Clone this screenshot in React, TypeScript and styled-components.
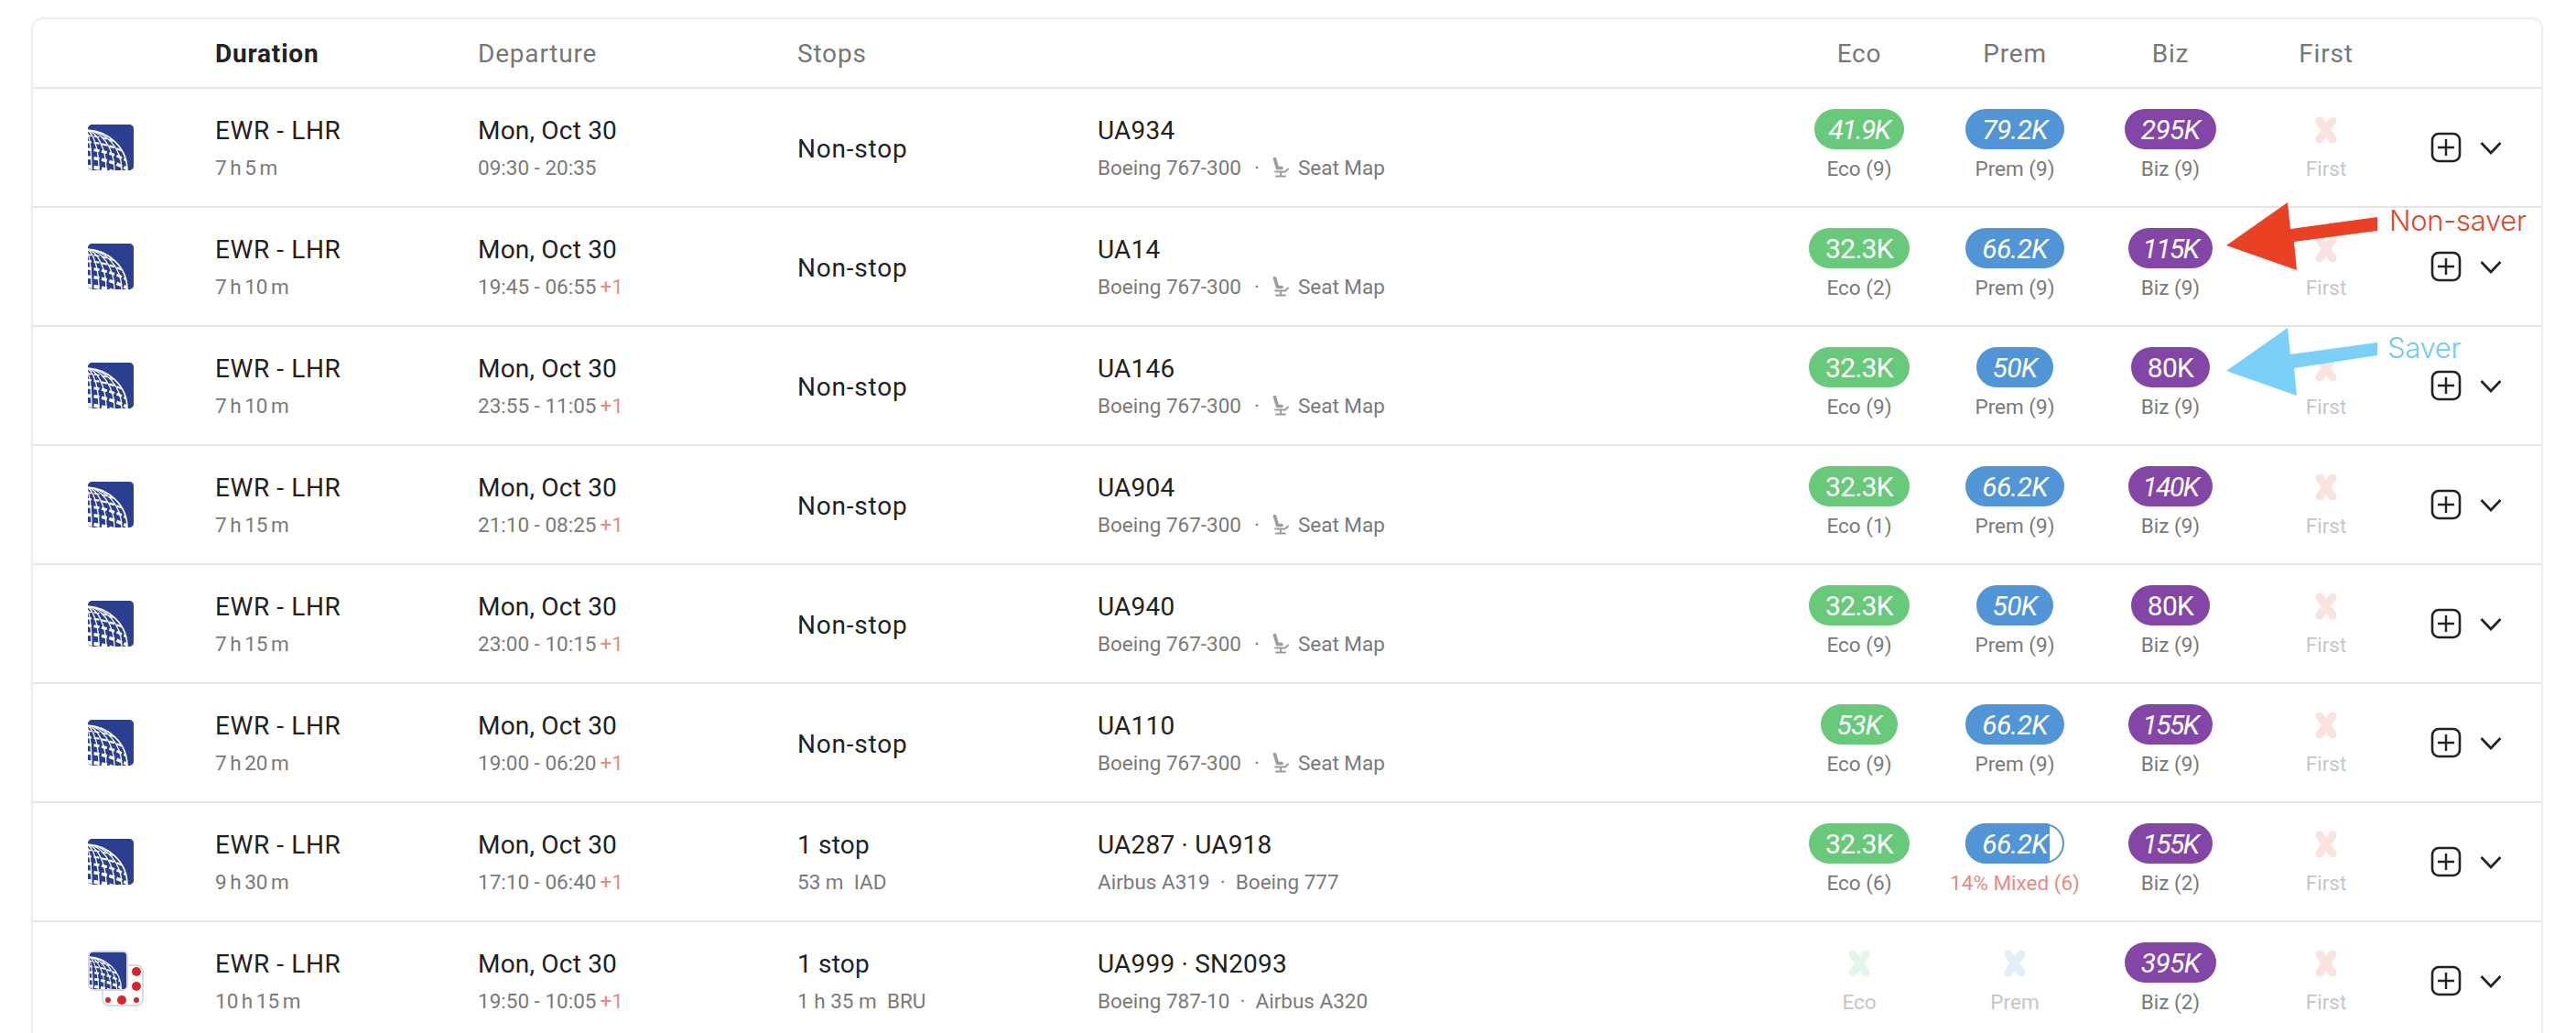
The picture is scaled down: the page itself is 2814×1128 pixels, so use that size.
import React from "react";
import styled, { createGlobalStyle } from "styled-components";

const Global = createGlobalStyle`
  html, body { margin: 0; padding: 0; background: #fff; overflow: hidden; height: 100%; }
  body { font-family: Roboto, "Liberation Sans", sans-serif; color: #222; }
`;
const COLS = "199px 287px 349px 328px 747px 170px 170px 170px 170px 150px";

const Page = styled.div`
  position: relative;
  padding: 21px 38px 0 36px;
  height: 1128px;
  box-sizing: border-box;
  overflow: hidden;
`;
const Card = styled.div`
  background: #fff;
  border-radius: 10px 10px 0 0;
  box-shadow: 0 0 4px rgba(0, 0, 0, 0.2);
`;
const Header = styled.div`
  display: grid;
  grid-template-columns: ${COLS};
  height: 76px;
  box-sizing: border-box;
  align-items: center;
  border-bottom: 2px solid #e6e6e6;
`;
const HeadCell = styled.div<{ $center?: boolean; $active?: boolean }>`
  font-size: 28px;
  letter-spacing: 0.8px;
  font-weight: ${(p) => (p.$active ? 700 : 400)};
  color: ${(p) => (p.$active ? "#222" : "#777")};
  text-align: ${(p) => (p.$center ? "center" : "left")};
`;
const Row = styled.div`
  display: grid;
  grid-template-columns: ${COLS};
  height: 130px;
  box-sizing: border-box;
  align-items: center;
  border-bottom: 2px solid #e6e6e6;
`;
const LogoCell = styled.div`
  padding-left: 60px;
  display: flex;
  align-items: center;
`;
const Stack = styled.div`
  display: flex;
  flex-direction: column;
  gap: 11px;
`;
const Main = styled.div<{ $solo?: boolean; $route?: boolean }>`
  font-size: 28px;
  line-height: 32px;
  letter-spacing: ${(p) => (p.$solo ? "0.8px" : p.$route ? "0.6px" : "0.2px")};
  margin-top: ${(p) => (p.$solo ? "3px" : "0")};
  color: #222;
`;
const Sub = styled.div<{ $narrow?: boolean }>`
  font-size: 22.5px;
  line-height: 26px;
  color: #7a7a7a;
  display: flex;
  align-items: center;
  white-space: pre;
  word-spacing: ${(p) => (p.$narrow ? "-2px" : "0")};
`;
const Plus = styled.span`
  color: #e98b82;
  margin-left: 4px;
`;
const Dot = styled.span`
  margin: 0 14px;
`;
const Fare = styled.div`
  display: flex;
  flex-direction: column;
  align-items: center;
  gap: 7px;
  height: 84px;
`;
const Pill = styled.div<{ $bg: string; $italic?: boolean; $mixed?: boolean; $tight?: boolean }>`
  height: 44px;
  padding: 0 ${(p) => (p.$tight ? "16px" : "18px")};
  border-radius: 22px;
  display: flex;
  align-items: center;
  justify-content: center;
  color: #fff;
  font-size: 30px;
  letter-spacing: ${(p) => (p.$tight ? "-1.6px" : "-0.7px")};
  font-style: ${(p) => (p.$italic ? "italic" : "normal")};
  background: ${(p) =>
    p.$mixed ? `linear-gradient(90deg, ${p.$bg} 85%, #fff 85%)` : p.$bg};
  box-shadow: ${(p) => (p.$mixed ? `inset 0 0 0 2px ${p.$bg}` : "none")};
`;
const FareLabel = styled.div<{ $tone?: "faded" | "mixed" }>`
  font-size: 22.5px;
  line-height: 28px;
  white-space: nowrap;
  color: ${(p) =>
    p.$tone === "faded" ? "#c6c6c6" : p.$tone === "mixed" ? "#e98b82" : "#7a7a7a"};
`;
const CrossSlot = styled.div`
  height: 44px;
  padding-top: 2px;
  box-sizing: border-box;
  display: flex;
  align-items: center;
  justify-content: center;
`;
const Actions = styled.div`
  display: flex;
  align-items: center;
  gap: 20px;
  padding-left: 29px;
`;
const Seat = styled.svg`
  margin-right: 10px;
`;
const Overlay = styled.svg`
  position: absolute;
  left: 0;
  top: 0;
  pointer-events: none;
`;
const Note = styled.div<{ $color: string; $x: number; $y: number }>`
  position: absolute;
  left: ${(p) => p.$x}px;
  top: ${(p) => p.$y}px;
  color: ${(p) => p.$color};
  font-family: Inter, Roboto, sans-serif;
  font-weight: 300;
  font-size: 31px;
  line-height: 36px;
  letter-spacing: -0.3px;
`;

const GREEN = "#69c97b";
const BLUE = "#5295d6";
const PURPLE = "#8446a6";

let uid = 0;
const GlobeArt: React.FC = () => {
  const id = `g${uid++}`;
  return (
    <>
      <defs>
        <clipPath id={id}>
          <rect width="50" height="50" rx="5" />
        </clipPath>
      </defs>
      <g clipPath={`url(#${id})`}>
        <rect width="50" height="50" fill="#2b3f90" />
        <g fill="none" stroke="#fff">
          {[
            { y: 12, w: 1.6 },
            { y: 19, w: 2.2 },
            { y: 27, w: 3 },
            { y: 36, w: 3.6 },
            { y: 46, w: 4.2 },
          ].map((p) => (
            <path key={p.y} d={`M-2 ${p.y} Q 22 ${p.y + 1} 46 ${p.y + 14}`} strokeWidth={p.w} strokeDasharray="6 2.6" />
          ))}
          {[7, 15, 23, 32, 40].map((r) => (
            <ellipse key={r} cx="-3" cy="50" rx={r} ry="44" strokeWidth="1.3" />
          ))}
        </g>
        <path d="M-3 6 A46 44 0 0 1 43 50 L50 50 L50 0 L-3 0Z" fill="#2b3f90" />
        <path d="M-3 6 A46 44 0 0 1 43 50" fill="none" stroke="#fff" strokeWidth="1.6" />
      </g>
    </>
  );
};

const Logo: React.FC<{ partner?: boolean }> = ({ partner }) =>
  partner ? (
    <svg width="62" height="66" viewBox="0 0 62 66">
      <rect x="16" y="16" width="44" height="44" rx="7" fill="#fff" stroke="#d9dbe1" strokeWidth="2" />
      <circle cx="53" cy="23" r="5" fill="#d8262f" />
      <circle cx="53" cy="39" r="5" fill="#d8262f" />
      <circle cx="53" cy="54" r="3" fill="#d8262f" />
      <circle cx="37" cy="54" r="5" fill="#d8262f" />
      <circle cx="22" cy="54" r="3" fill="#d8262f" />
      <rect x="1" y="1" width="42" height="42" rx="6" fill="#d5d7de" stroke="#d5d7de" strokeWidth="2" />
      <svg x="2" y="2" width="40" height="40" viewBox="0 0 50 50">
        <GlobeArt />
      </svg>
    </svg>
  ) : (
    <svg width="50" height="50" viewBox="0 0 50 50">
      <GlobeArt />
    </svg>
  );

const Cross: React.FC<{ color: string }> = ({ color }) => (
  <svg width="30" height="30" viewBox="0 0 30 30">
    <path d="M8 5 L22 25 M22 5 L8 25" stroke={color} strokeWidth="9" strokeLinecap="round" fill="none" />
  </svg>
);

const SeatIcon = () => (
  <Seat width="18" height="22" viewBox="0 0 18 22">
    <path d="M2.5 1.5 L5.5 11.5 L10 11.5" stroke="#9c9c9c" strokeWidth="3.6" fill="none" strokeLinecap="round" strokeLinejoin="round" />
    <path d="M3 15.5 H14 L17 12.5 M9 16 V20 M4 20.5 H14" stroke="#9c9c9c" strokeWidth="1.9" fill="none" strokeLinecap="round" strokeLinejoin="round" />
  </Seat>
);

const AddIcon = () => (
  <svg width="34" height="34" viewBox="0 0 34 34">
    <rect x="2" y="2" width="30" height="30" rx="7" fill="none" stroke="#222" strokeWidth="2.6" />
    <path d="M17 8 V26 M8 17 H26" stroke="#222" strokeWidth="2.4" />
  </svg>
);
const Chevron = () => (
  <svg width="24" height="15" viewBox="0 0 24 15">
    <path d="M1.5 2 L12 13 L22.5 2" fill="none" stroke="#222" strokeWidth="2.6" />
  </svg>
);

type F = { v: string; i?: boolean; l: string; mix?: boolean } | null;
type R = {
  d: string;
  time: string;
  plus?: boolean;
  stop: string;
  stopSub?: string;
  fl: string;
  sub: string;
  seat?: boolean;
  eco: F;
  prem: F;
  biz: F;
  partner?: boolean;
};

const B767 = "Boeing 767-300";
const rows: R[] = [
  { d: "7 h 5 m", time: "09:30 - 20:35", stop: "Non-stop", fl: "UA934", sub: B767, seat: true, eco: { v: "41.9K", i: true, l: "Eco (9)" }, prem: { v: "79.2K", i: true, l: "Prem (9)" }, biz: { v: "295K", i: true, l: "Biz (9)" } },
  { d: "7 h 10 m", time: "19:45 - 06:55", plus: true, stop: "Non-stop", fl: "UA14", sub: B767, seat: true, eco: { v: "32.3K", l: "Eco (2)" }, prem: { v: "66.2K", i: true, l: "Prem (9)" }, biz: { v: "115K", i: true, l: "Biz (9)" } },
  { d: "7 h 10 m", time: "23:55 - 11:05", plus: true, stop: "Non-stop", fl: "UA146", sub: B767, seat: true, eco: { v: "32.3K", l: "Eco (9)" }, prem: { v: "50K", i: true, l: "Prem (9)" }, biz: { v: "80K", l: "Biz (9)" } },
  { d: "7 h 15 m", time: "21:10 - 08:25", plus: true, stop: "Non-stop", fl: "UA904", sub: B767, seat: true, eco: { v: "32.3K", l: "Eco (1)" }, prem: { v: "66.2K", i: true, l: "Prem (9)" }, biz: { v: "140K", i: true, l: "Biz (9)" } },
  { d: "7 h 15 m", time: "23:00 - 10:15", plus: true, stop: "Non-stop", fl: "UA940", sub: B767, seat: true, eco: { v: "32.3K", l: "Eco (9)" }, prem: { v: "50K", i: true, l: "Prem (9)" }, biz: { v: "80K", l: "Biz (9)" } },
  { d: "7 h 20 m", time: "19:00 - 06:20", plus: true, stop: "Non-stop", fl: "UA110", sub: B767, seat: true, eco: { v: "53K", i: true, l: "Eco (9)" }, prem: { v: "66.2K", i: true, l: "Prem (9)" }, biz: { v: "155K", i: true, l: "Biz (9)" } },
  { d: "9 h 30 m", time: "17:10 - 06:40", plus: true, stop: "1 stop", stopSub: "53 m  IAD", fl: "UA287 · UA918", sub: "Airbus A319  ·  Boeing 777", eco: { v: "32.3K", l: "Eco (6)" }, prem: { v: "66.2K", i: true, l: "14% Mixed (6)", mix: true }, biz: { v: "155K", i: true, l: "Biz (2)" } },
  { d: "10 h 15 m", time: "19:50 - 10:05", plus: true, stop: "1 stop", stopSub: "1 h 35 m  BRU", fl: "UA999 · SN2093", sub: "Boeing 787-10  ·  Airbus A320", eco: null, prem: null, biz: { v: "395K", i: true, l: "Biz (2)" }, partner: true },
];

const FareCell: React.FC<{ f: F; bg: string; cross: string; name: string }> = ({ f, bg, cross, name }) => (
  <Fare>
    {f ? (
      <Pill $bg={bg} $italic={f.i} $mixed={f.mix} $tight={/^(1|41)/.test(f.v)}>{f.v}</Pill>
    ) : (
      <CrossSlot><Cross color={cross} /></CrossSlot>
    )}
    <FareLabel $tone={!f ? "faded" : f.mix ? "mixed" : undefined}>{f ? f.l : name}</FareLabel>
  </Fare>
);

export default function App() {
  return (
    <Page>
      <Global />
      <Card>
        <Header>
          <HeadCell />
          <HeadCell $active>Duration</HeadCell>
          <HeadCell>Departure</HeadCell>
          <HeadCell>Stops</HeadCell>
          <HeadCell />
          <HeadCell $center>Eco</HeadCell>
          <HeadCell $center>Prem</HeadCell>
          <HeadCell $center>Biz</HeadCell>
          <HeadCell $center>First</HeadCell>
          <HeadCell />
        </Header>
        {rows.map((r, i) => (
          <Row key={i}>
            <LogoCell><Logo partner={r.partner} /></LogoCell>
            <Stack>
              <Main $route>EWR - LHR</Main>
              <Sub $narrow>{r.d}</Sub>
            </Stack>
            <Stack>
              <Main>Mon, Oct 30</Main>
              <Sub>{r.time}{r.plus && <Plus>+1</Plus>}</Sub>
            </Stack>
            <Stack>
              <Main $solo={!r.stopSub}>{r.stop}</Main>
              {r.stopSub && <Sub>{r.stopSub}</Sub>}
            </Stack>
            <Stack>
              <Main>{r.fl}</Main>
              <Sub>
                {r.sub}
                {r.seat && <><Dot>·</Dot><SeatIcon />Seat Map</>}
              </Sub>
            </Stack>
            <FareCell f={r.eco} bg={GREEN} cross="#e5f5e9" name="Eco" />
            <FareCell f={r.prem} bg={BLUE} cross="#e4eef8" name="Prem" />
            <FareCell f={r.biz} bg={PURPLE} cross="#fff" name="Biz" />
            <FareCell f={null} bg="" cross="#f9e2df" name="First" />
            <Actions><AddIcon /><Chevron /></Actions>
          </Row>
        ))}
      </Card>
      <Overlay width="2814" height="1128" viewBox="0 0 2814 1128">
        <polygon points="2432,268 2499,221 2502,250 2597,237 2597,252 2506,264 2509,295" fill="#ea4125" />
        <polygon points="2432,405 2499,358 2502,387 2597,374 2597,388 2506,402 2509,432" fill="#7bd0f8" />
      </Overlay>
      <Note $color="#e2452c" $x={2610} $y={223}>Non-saver</Note>
      <Note $color="#6fc9f5" $x={2608} $y={362}>Saver</Note>
    </Page>
  );
}
